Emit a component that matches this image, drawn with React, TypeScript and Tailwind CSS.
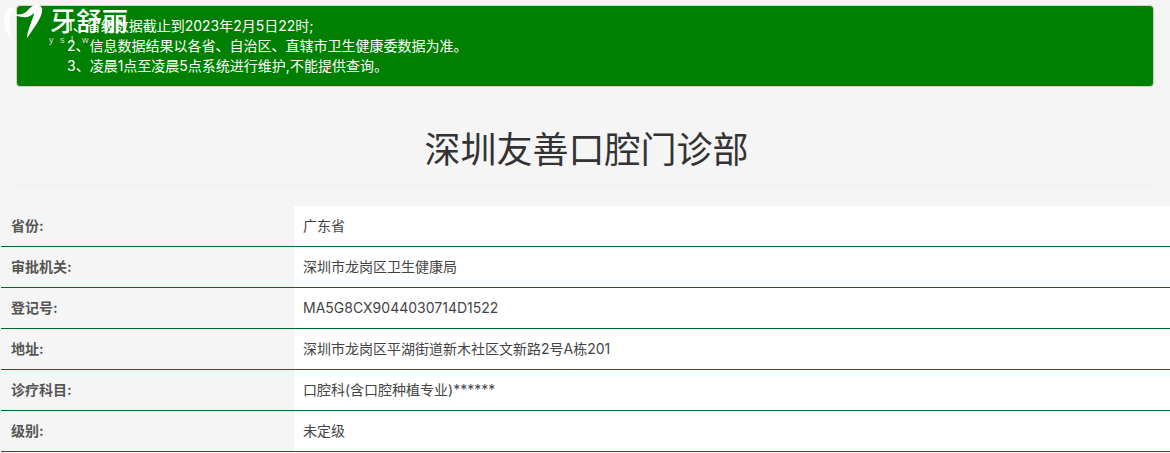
// App.tsx
const rows = [
  { label: '省份:', value: '广东省' },
  { label: '审批机关:', value: '深圳市龙岗区卫生健康局' },
  { label: '登记号:', value: 'MA5G8CX9044030714D1522' },
  { label: '地址:', value: '深圳市龙岗区平湖街道新木社区文新路2号A栋201' },
  { label: '诊疗科目:', value: '口腔科(含口腔种植专业)******' },
  { label: '级别:', value: '未定级' },
];

const sans = "font-['Inter','Noto_Sans_CJK_SC',sans-serif]";

function Logo() {
  return (
    <div className="absolute left-0 top-0 w-[140px] h-[50px] pointer-events-none">
      <svg width="46" height="42" viewBox="0 0 46 42" className="absolute left-0 top-0">
        <path d="M14 14 C18 15 23 15 27 11 C30 8 34 4 38 5 C41 6 43 8 42 12 C41 18 36 25 27 38 C27 32 30 26 32 20 C33 17 34 15 34 13 C31 16 27 18 23 17 C20 17 16 16 14 14 Z" fill="#ffffff" />
        <path d="M10 8 C5 11 3 17 4 24 C5 31 8 36 12 40 C10 32 9 24 10 17 C11 13 13 11 16 10 C14 9 12 8 10 8 Z" fill="#ffffff" opacity="0.8" />
      </svg>
      <div className="absolute left-[50px] top-[5px] text-[26px] leading-[30px] font-medium text-white font-['Noto_Sans_CJK_SC',serif] whitespace-nowrap">
        牙舒丽
      </div>
      <div className="absolute left-[49px] top-[35px] flex gap-[6px] text-[9px] leading-[11px] text-[#dddddd] font-['Liberation_Sans',sans-serif] whitespace-nowrap">
        <span className="w-[5px]">y</span>
        <span className="w-[5px]">s</span>
        <span className="w-[5px]">l</span>
        <span className="w-[7px]">w</span>
      </div>
    </div>
  );
}

export default function App() {
  return (
    <div className={`relative min-h-[453px] bg-[#f5f5f5] overflow-hidden text-[#333333] ${sans}`}>
      <Logo />

      <div className="pt-[5px] px-[16px]">
        <div className="h-[82px] rounded-[4px] border border-[#d6d0c4] bg-[#008000] pl-[50px] pt-[10px] text-[14px] leading-[20px] text-white">
          <p>1、省级数据截止到2023年2月5日22时;</p>
          <p>2、信息数据结果以各省、自治区、直辖市卫生健康委数据为准。</p>
          <p>3、凌晨1点至凌晨5点系统进行维护,不能提供查询。</p>
        </div>

        <div className="mt-[18px] h-[81px] border-b border-[#eeeeee] flex items-center justify-center">
          <h1 className="text-[36px] leading-[40px] font-normal text-[#333333] pt-[10px] pl-[3px]">深圳友善口腔门诊部</h1>
        </div>
      </div>

      <div className="mt-[20px] ml-px">
        {rows.map(row => (
          <div key={row.label} className="flex h-[41px] border-b border-[#006633] text-[14px] text-[#555555]">
            <div className="w-[293px] flex items-center pl-[10px] pb-[2px] font-bold">{row.label}</div>
            <div className="flex-1 bg-white flex items-center pl-[9px] pb-[2px] text-[#444444]">{row.value}</div>
          </div>
        ))}
      </div>
    </div>
  );
}
